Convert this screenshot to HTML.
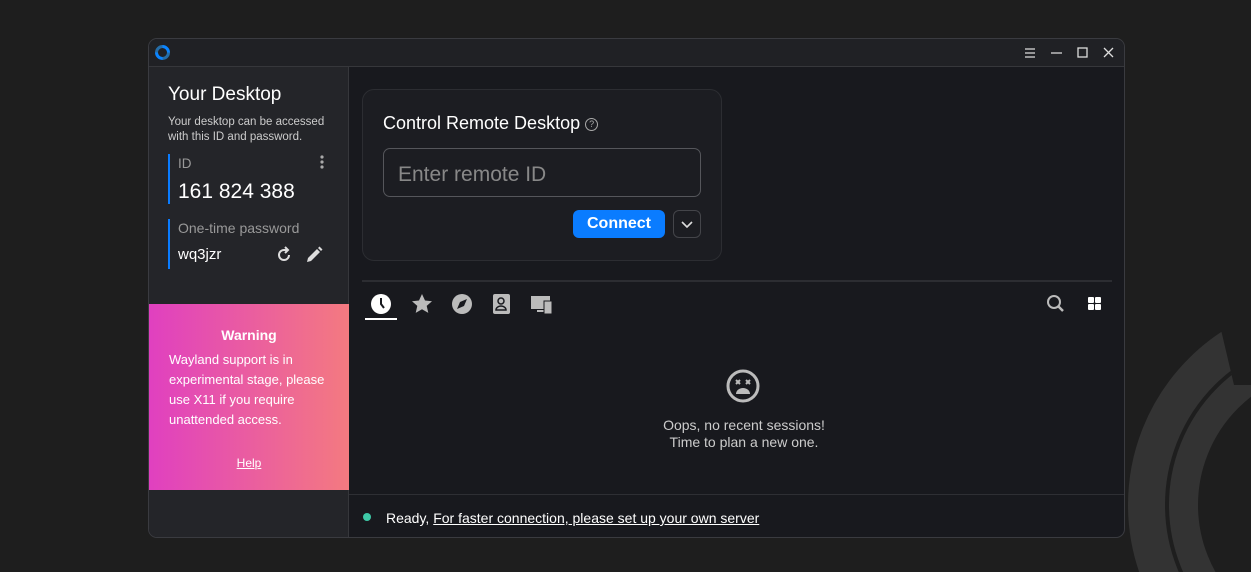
<!DOCTYPE html><html><head><style>
body{margin:0;width:1251px;height:572px;background:#1e1e1e;font-family:"Liberation Sans",sans-serif;overflow:hidden;position:relative}
.win{position:absolute;left:148px;top:38px;width:975px;height:498px;border:1px solid #3a3b40;border-radius:9px;overflow:hidden;background:#18191e}
.title{height:27px;border-bottom:1px solid #36373b;background:#202125;position:relative}
.side{position:absolute;left:0;top:28px;width:199px;bottom:0;background:#242529;border-right:1px solid #36373b}
.t{position:absolute;white-space:nowrap}
</style></head><body>
<svg style="position:absolute;left:0;top:0;display:block" width="1251" height="572">
<defs><clipPath id="c"><polygon points="1100,572 1100,300 1214,300 1234,385 1251,385 1251,572"/></clipPath></defs>
<g clip-path="url(#c)"><circle cx="1335" cy="505" r="172" stroke="#333" stroke-width="70" fill="none"/><circle cx="1335" cy="505" r="168" stroke="#1e1e1e" stroke-width="4" fill="none"/></g>
</svg>
<div class="win">
<div class="title">
<svg style="position:absolute;left:5px;top:5px" width="17" height="17" viewBox="0 0 17 17"><path d="M8.5 2.5A6 6 0 0 1 14.5 8.5" stroke="#0a84ff" stroke-width="3" fill="none"/><path d="M8.5 14.5A6 6 0 0 1 2.5 8.5" stroke="#0a84ff" stroke-width="3" fill="none"/><path d="M14.5 8.5A6 6 0 0 1 8.5 14.5M2.5 8.5A6 6 0 0 1 8.5 2.5" stroke="#2aa0ff" stroke-width="3" fill="none" opacity=".6"/></svg>
<svg style="position:absolute;left:870px;top:6px" width="100" height="16"><g stroke="#ddd" stroke-width="1.3" fill="none"><path d="M6 4h10M6 8h10M6 12h10"/><path d="M32 8h11"/><rect x="59" y="3" width="9" height="9"/><path d="M85 3l9 9M94 3l-9 9"/></g></svg>
</div>
<div class="side">
<div class="t" style="left:19px;top:17px;font-size:19px;color:#fff">Your Desktop</div>
<div class="t" style="left:19px;top:48px;font-size:11.5px;color:#ccc;line-height:15px">Your desktop can be accessed<br>with this ID and password.</div>
<div style="position:absolute;left:19px;top:87px;width:2px;height:50px;background:#0a7cff"></div>
<div class="t" style="left:29px;top:89px;font-size:13.5px;color:#999">ID</div>
<div class="t" style="left:29px;top:113px;font-size:21px;color:#fff">161 824 388</div>
<svg style="position:absolute;left:169px;top:87px" width="8" height="16"><circle cx="4" cy="3" r="1.6" fill="#aaa"/><circle cx="4" cy="8" r="1.6" fill="#aaa"/><circle cx="4" cy="13" r="1.6" fill="#aaa"/></svg>
<div style="position:absolute;left:19px;top:152px;width:2px;height:50px;background:#0a7cff"></div>
<div class="t" style="left:29px;top:153px;font-size:14px;color:#999">One-time password</div>
<div class="t" style="left:29px;top:179px;font-size:15px;color:#fff">wq3jzr</div>
<svg style="position:absolute;left:126px;top:179px" width="18" height="18" viewBox="0 0 18 18"><path d="M14 9A5 5 0 1 1 9 4h3" stroke="#ddd" stroke-width="2" fill="none"/><path d="M10 1l3 3-3 3" stroke="#ddd" stroke-width="2" fill="none"/></svg>
<svg style="position:absolute;left:155px;top:178px" width="20" height="20" viewBox="0 0 20 20"><path d="M3 17l1-4 9-9 3 3-9 9zM14 3l1.5-1.5 3 3L17 6z" fill="#ddd"/></svg>
<div style="position:absolute;left:0;top:237px;width:200px;height:186px;background:linear-gradient(90deg,#e040c0,#f47a80)">
<div class="t" style="left:0;width:200px;text-align:center;top:23px;font-size:14px;font-weight:bold;color:#fff">Warning</div>
<div class="t" style="left:20px;top:46px;font-size:13px;line-height:20px;color:#fff">Wayland support is in<br>experimental stage, please<br>use X11 if you require<br>unattended access.</div>
<div class="t" style="left:0;width:200px;text-align:center;top:152px;font-size:12px;color:#fff;text-decoration:underline">Help</div>
</div>
</div>
<div style="position:absolute;left:213px;top:50px;width:358px;height:170px;border:1px solid #2c2d32;border-radius:12px;background:#1c1d22">
<div class="t" style="left:20px;top:23px;font-size:18px;color:#fff">Control Remote Desktop <span style="display:inline-block;width:11px;height:11px;border:1.3px solid #aaa;border-radius:50%;font-size:9px;line-height:11px;text-align:center;color:#aaa;vertical-align:2px">?</span></div>
<div style="position:absolute;left:20px;top:58px;width:316px;height:47px;border:1px solid #55565b;border-radius:7px"></div>
<div class="t" style="left:35px;top:73px;font-size:21px;color:#888">Enter remote ID</div>
<div style="position:absolute;left:210px;top:120px;width:92px;height:28px;background:#0a7cff;border-radius:6px;color:#fff;font-size:16px;font-weight:bold;text-align:center;line-height:28px">Connect</div>
<div style="position:absolute;left:310px;top:120px;width:26px;height:26px;border:1px solid #44454a;border-radius:6px"><svg width="26" height="26"><path d="M8 11l5 5 5-5" stroke="#ddd" stroke-width="1.6" fill="none"/></svg></div>
</div>
<div style="position:absolute;left:213px;top:241px;width:750px;height:2px;background:#2c2d32"></div>
<svg style="position:absolute;left:216px;top:252px" width="200" height="30">
<circle cx="16" cy="13" r="10" fill="#fff"/><path d="M16 7v6l3 4" stroke="#18191e" stroke-width="2" fill="none"/>
<rect x="0" y="27" width="32" height="2" fill="#fff"/>
<path d="M57 3l3 6.5 7 .7-5.3 4.7 1.6 7-6.3-3.7-6.3 3.7 1.6-7-5.3-4.7 7-.7z" fill="#bbb"/>
<circle cx="97" cy="13" r="10" fill="#bbb"/><path d="M102 8l-3 7-7 3 3-7z" fill="#18191e"/>
<rect x="128" y="3" width="17" height="20" rx="2" fill="#bbb"/><circle cx="136" cy="10" r="3" stroke="#18191e" stroke-width="1.5" fill="none"/><path d="M131 19a5 4 0 0 1 10 0z" stroke="#18191e" stroke-width="1.5" fill="none"/>
<rect x="166" y="5" width="19" height="13" fill="#bbb"/><rect x="172" y="19" width="8" height="2" fill="#bbb"/><rect x="179" y="10" width="8" height="13" fill="#bbb" stroke="#18191e" stroke-width="1"/>
</svg>
<svg style="position:absolute;left:896px;top:254px" width="60" height="24"><circle cx="9" cy="9" r="6" stroke="#bbb" stroke-width="2" fill="none"/><path d="M13 13l5 5" stroke="#bbb" stroke-width="2.5"/><g fill="#fff"><rect x="43" y="4" width="6" height="6" rx="1"/><rect x="50" y="4" width="6" height="6" rx="1"/><rect x="43" y="11" width="6" height="6" rx="1"/><rect x="50" y="11" width="6" height="6" rx="1"/></g></svg>
<svg style="position:absolute;left:576px;top:330px" width="36" height="36"><circle cx="18" cy="17" r="15" stroke="#bbb" stroke-width="3" fill="none"/><path d="M11 11l4 4M15 11l-4 4M21 11l4 4M25 11l-4 4" stroke="#bbb" stroke-width="2"/><path d="M11 25a7 6 0 0 1 14 0z" fill="#bbb"/></svg>
<div class="t" style="left:400px;width:390px;text-align:center;top:378px;font-size:14px;line-height:17px;color:#ccc">Oops, no recent sessions!<br>Time to plan a new one.</div>
<div style="position:absolute;left:200px;top:455px;right:0;height:1px;background:#2e2f34"></div>
<div style="position:absolute;left:214px;top:474px;width:8px;height:8px;border-radius:50%;background:#3ec9a7"></div>
<div class="t" style="left:237px;top:471px;font-size:14px;color:#fff">Ready, <span style="text-decoration:underline">For faster connection, please set up your own server</span></div>
</div>
</body></html>
